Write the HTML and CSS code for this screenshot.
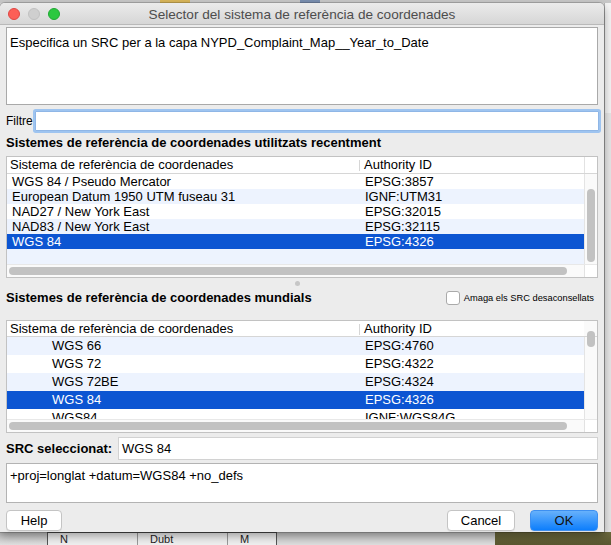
FILE: index.html
```html
<!DOCTYPE html>
<html lang="ca">
<head>
<meta charset="utf-8">
<title>Selector del sistema de referència de coordenades</title>
<link rel="stylesheet" href="styles.css">
</head>
<body>
<div class="screen">
  <div class="top-strip"></div>
  <div class="middle">
    <div class="dialog">
      <div class="titlebar">
        <div class="lights">
          <span class="light red"></span>
          <span class="light gray"></span>
          <span class="light green"></span>
        </div>
        <div class="title">Selector del sistema de referència de coordenades</div>
        <div class="title-pad"></div>
      </div>
      <div class="content">
        <div class="msg">Especifica un SRC per a la capa NYPD_Complaint_Map__Year_to_Date</div>
        <div class="filter-row">
          <label class="filter-label">Filtre</label>
          <div class="filter-input"></div>
        </div>
        <div class="heading h1">Sistemes de referència de coordenades utilitzats recentment</div>
        <div class="table t1">
          <div class="thead">
            <div class="th c1">Sistema de referència de coordenades</div>
            <div class="th c2">Authority ID</div>
            <div class="th c3"></div>
          </div>
          <div class="tbody">
            <div class="rows">
              <div class="row"><span class="c1">WGS 84 / Pseudo Mercator</span><span class="c2">EPSG:3857</span></div>
              <div class="row alt"><span class="c1">European Datum 1950 UTM fuseau 31</span><span class="c2">IGNF:UTM31</span></div>
              <div class="row"><span class="c1">NAD27 / New York East</span><span class="c2">EPSG:32015</span></div>
              <div class="row alt"><span class="c1">NAD83 / New York East</span><span class="c2">EPSG:32115</span></div>
              <div class="row sel"><span class="c1">WGS 84</span><span class="c2">EPSG:4326</span></div>
              <div class="row alt"><span class="c1"></span><span class="c2"></span></div>
            </div>
            <div class="vscroll"><div class="vthumb"></div></div>
          </div>
          <div class="hscroll">
            <div class="htrack"><div class="hthumb"></div></div>
            <div class="corner"></div>
          </div>
        </div>
        <div class="splitter"><span class="dot"></span></div>
        <div class="heading-row">
          <div class="heading">Sistemes de referència de coordenades mundials</div>
          <label class="check"><span class="box"></span><span class="check-label">Amaga els SRC desaconsellats</span></label>
        </div>
        <div class="table t2">
          <div class="thead">
            <div class="th c1">Sistema de referència de coordenades</div>
            <div class="th c2">Authority ID</div>
            <div class="th c3"></div>
          </div>
          <div class="tbody">
            <div class="rows">
              <div class="row alt"><span class="c1 indent">WGS 66</span><span class="c2">EPSG:4760</span></div>
              <div class="row"><span class="c1 indent">WGS 72</span><span class="c2">EPSG:4322</span></div>
              <div class="row alt"><span class="c1 indent">WGS 72BE</span><span class="c2">EPSG:4324</span></div>
              <div class="row sel"><span class="c1 indent">WGS 84</span><span class="c2">EPSG:4326</span></div>
              <div class="row"><span class="c1 indent">WGS84</span><span class="c2">IGNF:WGS84G</span></div>
            </div>
            <div class="vscroll"><div class="vthumb"></div></div>
          </div>
          <div class="hscroll">
            <div class="htrack"><div class="hthumb"></div></div>
            <div class="corner"></div>
          </div>
        </div>
        <div class="src-row">
          <label class="src-label">SRC seleccionat:</label>
          <div class="src-input">WGS 84</div>
        </div>
        <div class="proj">+proj=longlat +datum=WGS84 +no_defs</div>
        <div class="buttons">
          <button class="btn help">Help</button>
          <div class="spacer"></div>
          <button class="btn cancel">Cancel</button>
          <button class="btn ok">OK</button>
        </div>
      </div>
    </div>
    <div class="right-strip">
      <div class="rs-a"></div>
      <div class="rs-b"></div>
    </div>
  </div>
  <div class="bottom-strip">
    <div class="bs-shadow"></div>
    <div class="bs-table"><span class="bs-col w1">N</span><span class="bs-col w2">Dubt</span><span class="bs-col w3">M</span></div>
    <div class="bs-gray"></div>
    <div class="bs-map"></div>
  </div>
</div>
</body>
</html>
```

FILE: styles.css
```css
* { box-sizing: border-box; }
html, body { margin: 0; padding: 0; }
body {
  width: 611px;
  height: 545px;
  overflow: hidden;
  background: #d9d9d9;
  font-family: "Liberation Sans", Arial, Helvetica, sans-serif;
  font-size: 13px;
  color: #000;
}
.screen { display: flex; flex-direction: column; width: 611px; height: 545px; }
.top-strip {
  height: 3px;
  background: linear-gradient(90deg, #c8c8c8 0, #c8c8c8 160px, #d9b65a 160px, #d9b65a 190px, #c8c8c8 190px, #c8c8c8 300px, #7a8fb0 300px, #7a8fb0 320px, #c8c8c8 320px);
}
.middle { display: flex; height: 529px; }
.dialog {
  width: 604px;
  height: 529px;
  background: #ececec;
  border-radius: 5px 5px 0 0;
  box-shadow: 0 0 0 1px rgba(0,0,0,0.18), 0 4px 10px rgba(0,0,0,0.35);
  display: flex;
  flex-direction: column;
  position: relative;
  z-index: 1;
}
.titlebar {
  height: 22px;
  border-radius: 5px 5px 0 0;
  background: linear-gradient(#ebebeb, #d6d6d6);
  border-bottom: 1px solid #b9b9b9;
  display: grid;
  grid-template-columns: 1fr auto 1fr;
  align-items: center;
}
.lights { display: flex; gap: 8px; padding-left: 8px; padding-top: 1px; }
.light { width: 12px; height: 12px; border-radius: 50%; display: block; }
.light.red { background: #fc5f57; border: 1px solid #df4744; }
.light.gray { background: #cfcfcf; border: 1px solid #c1c1c1; }
.light.green { background: #2bc840; border: 1px solid #20a933; }
.title {
  text-align: center;
  color: #4d4d4d;
  font-size: 13.6px;
  padding-top: 1px;
  white-space: nowrap;
}
.content { padding: 0 6px 2px 6px; display: flex; flex-direction: column; }
.msg {
  margin-top: 2px;
  height: 78px;
  background: #fff;
  border: 1px solid #a9a9a9;
  padding: 7px 0 0 3px;
  line-height: 15px;
  font-size: 13px;
}
.filter-row { margin-top: 5px; height: 22px; display: flex; align-items: center; }
.filter-label { width: 29px; font-size: 12px; }
.filter-input {
  flex: 1;
  height: 20px;
  margin-right: -1px;
  background: #fff;
  border: 1px solid #8fb6e6;
  box-shadow: 0 0 0 2px #9ec4f0;
  border-radius: 1px;
}
.heading { font-weight: bold; font-size: 13px; line-height: 16px; }
.h1 { margin-top: 3px; height: 16px; }
.table {
  background: #fff;
  border: 1px solid #c2c2c2;
  display: flex;
  flex-direction: column;
}
.t1 { margin-top: 5px; height: 122px; }
.t2 { margin-top: 13px; height: 113px; }
.thead {
  display: flex;
  height: 17px;
  border-bottom: 1px solid #d6d6d6;
  line-height: 16px;
}
.t2 .thead { height: 16px; line-height: 15px; }
.th.c1 { width: 353px; padding-left: 3px; position: relative; }
.th.c1::after {
  content: "";
  position: absolute;
  right: 0;
  top: 3px;
  height: 11px;
  border-right: 1px solid #d6d6d6;
}
.th.c2 { width: 224px; padding-left: 4px; }
.th.c3 { width: 13px; border-left: 1px solid #e2e2e2; }
.t2 .th.c3 { border-left: none; background: #fafafa; }
.tbody { display: flex; }
.t1 .tbody { height: 90px; }
.t2 .tbody { height: 82px; }
.rows { width: 577px; overflow: hidden; }
.row { display: flex; height: 15px; line-height: 15px; background: #fff; white-space: nowrap; }
.t2 .row { height: 18px; line-height: 18px; }
.row.alt { background: #edf3fe; }
.row.sel { background: #0c55d2; color: #fff; }
.row .c1 { width: 353px; padding-left: 5px; }
.row .c1.indent { padding-left: 45px; }
.row .c2 { width: 224px; padding-left: 5px; }
.vscroll {
  width: 13px;
  background: #fafafa;
  border-left: 1px solid #e4e4e4;
  display: flex;
  flex-direction: column;
  align-items: center;
}
.vthumb { width: 8px; background: #c2c2c2; border-radius: 4px; }
.t1 .vthumb { margin-top: 15px; height: 73px; }
.t2 .vthumb { margin-top: -6px; height: 16px; }
.hscroll { display: flex; height: 13px; border-top: 1px solid #e8e8e8; }
.htrack { width: 577px; background: #fafafa; display: flex; align-items: center; padding-left: 2px; }
.hthumb { width: 558px; height: 8px; background: #c2c2c2; border-radius: 4px; }
.corner { width: 13px; background: #fff; border-left: 1px solid #e2e2e2; }
.splitter { height: 11px; display: flex; align-items: center; justify-content: center; }
.dot { width: 5px; height: 5px; border-radius: 50%; background: #c6c6c6; display: block; margin-left: -10px; }
.heading-row { display: flex; align-items: center; justify-content: space-between; height: 18px; }
.check { display: flex; align-items: center; margin-right: 4px; }
.box {
  width: 14px; height: 14px;
  background: #fff;
  border: 1px solid #aaaaaa;
  border-radius: 3px;
  display: block;
  margin-right: 4px;
}
.check-label { font-size: 9.3px; }
.src-row { margin-top: 4px; height: 23px; display: flex; align-items: center; }
.src-label { width: 112px; font-weight: bold; }
.src-input {
  flex: 1;
  height: 23px;
  background: #fff;
  border: 1px solid #d2d2d2;
  padding-left: 3px;
  line-height: 21px;
}
.proj {
  margin-top: 3px;
  height: 40px;
  background: #fff;
  border: 1px solid #b3b3b3;
  padding: 4px 0 0 3px;
  line-height: 15px;
}
.buttons { margin-top: 7px; height: 20px; display: flex; }
.spacer { flex: 1; }
.btn {
  font-family: "Liberation Sans", Arial, Helvetica, sans-serif;
  font-size: 13px;
  height: 21px;
  background: #fff;
  border: 1px solid #c4c4c4;
  border-radius: 4px;
  padding: 0;
  color: #000;
  line-height: 18px;
  box-shadow: 0 1px 0 rgba(0,0,0,0.05);
}
.help { width: 56px; }
.cancel { width: 68px; }
.ok {
  width: 68px;
  margin-left: 15px;
  background: linear-gradient(#67b1fb, #0d7efc);
  border-color: #3d8ff0;
  color: #111;
}
.right-strip { width: 7px; display: flex; flex-direction: column; background: #ececec; border-left: 1px solid #b5b5b5; }
.rs-a { height: 110px; background: #f4f4f4; }
.rs-b { height: 420px; background: #e6e6e6; }
.bottom-strip { height: 13px; display: flex; }
.bs-shadow { width: 47px; background: linear-gradient(#bdbdbd, #e0e0e0); }
.bs-table {
  width: 230px;
  background: #efefef;
  border: 1px solid #555;
  border-bottom: none;
  display: flex;
  font-size: 11px;
  line-height: 12px;
  color: #222;
  overflow: hidden;
}
.bs-col { padding-left: 12px; border-right: 1px solid #999; }
.w1 { width: 90px; }
.w2 { width: 90px; }
.w3 { width: 48px; border-right: none; }
.bs-gray { width: 218px; background: linear-gradient(#c4c4c4, #dedede); }
.bs-map { flex: 1; background: linear-gradient(#6d6a3e, #5a5730); }
```
